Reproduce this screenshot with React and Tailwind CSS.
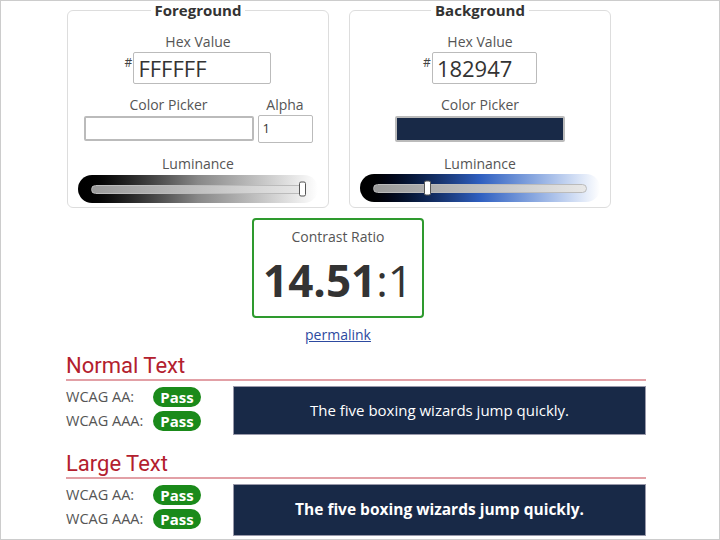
import React from 'react';

const font = { fontFamily: '"Open Sans", "Noto Sans", sans-serif' };

const Slider = ({ track, thumb }) => (
    <div className={`w-[240px] h-[28px] rounded-full flex items-center px-[13px] ${track}`}>
        <div className="relative w-full h-[9px] rounded-full bg-gradient-to-r from-[#9a9a9a] to-[#e8e8e8] border border-[#bbb]">
            <div className={`absolute top-1/2 -translate-y-1/2 w-[7px] h-[15px] bg-white border border-[#555] rounded-[2px] ${thumb}`} />
        </div>
    </div>
);

const Panel = ({ title, children }) => (
    <fieldset className="w-[262px] h-[206px] border border-[#ddd] rounded-[6px] flex flex-col items-center">
        <legend className="mx-auto px-1 text-[15px] font-bold text-[#333] leading-[17px]">{title}</legend>
        <div className="mt-[16px] text-[14px] text-[#555] leading-none">Hex Value</div>
        {children}
    </fieldset>
);

const Pass = () => (
    <span className="inline-flex items-center justify-center w-[48px] h-[20px] rounded-full bg-[#1a8a1a] text-white font-bold text-[15px] leading-none">Pass</span>
);

const Result = ({ title, bold, className }) => (
    <section className={className}>
        <h2 className="text-[22px] text-[#b3202e] leading-none pb-[2px] border-b-2 border-[#e2a0a6]" style={{ fontFamily: 'Roboto, sans-serif' }}>{title}</h2>
        <div className="flex mt-[5px]">
            <div className="w-[167px] flex flex-col gap-[2px]">
                <div className="flex items-center h-[22px] text-[14.5px] text-[#555]"><span className="w-[87px]">WCAG AA:</span><Pass /></div>
                <div className="flex items-center h-[22px] text-[14.5px] text-[#555]"><span className="w-[87px]">WCAG AAA:</span><Pass /></div>
            </div>
            <div className={`flex-1 flex items-center justify-center bg-[#182947] text-white border border-[#99a] ${bold ? 'h-[52px] text-[15.5px] font-bold' : 'h-[49px] text-[15px]'}`}>
                The five boxing wizards jump quickly.
            </div>
        </div>
    </section>
);

export default function App() {
    return (
        <div className="w-[720px] h-[540px] bg-white border border-[#ccc] overflow-hidden" style={font}>
            <div className="flex gap-[20px] pl-[66px] pt-[1px]">
                <Panel title="Foreground">
                    <div className="flex items-start mt-[3px]">
                        <span className="text-[12px] text-[#444] mt-[2px] mr-[1px]">#</span>
                        <div className="w-[138px] h-[32px] border border-[#bbb] rounded-[2px] flex items-center px-[4px] text-[22px] text-[#333]">FFFFFF</div>
                    </div>
                    <div className="flex gap-[4px] mt-[14px] items-end">
                        <div className="flex flex-col items-center">
                            <div className="text-[14px] text-[#555] leading-none mb-[4px]">Color Picker</div>
                            <div className="w-[170px] h-[25px] border-2 border-[#bbb] rounded-[2px] bg-white mb-[2px]" />
                        </div>
                        <div className="flex flex-col items-center">
                            <div className="text-[14px] text-[#555] leading-none mb-[3px]">Alpha</div>
                            <div className="w-[55px] h-[28px] border border-[#bbb] rounded-[2px] flex items-center px-[4px] text-[13px] text-[#333]">1</div>
                        </div>
                    </div>
                    <div className="text-[14px] text-[#555] leading-none mt-[14px] mb-[4px]">Luminance</div>
                    <Slider track="bg-gradient-to-r from-black via-[#888] to-white" thumb="right-[-2px]" />
                </Panel>
                <Panel title="Background">
                    <div className="flex items-start mt-[3px]">
                        <span className="text-[12px] text-[#444] mt-[2px] mr-[1px]">#</span>
                        <div className="w-[105px] h-[32px] border border-[#bbb] rounded-[2px] flex items-center px-[4px] text-[22px] text-[#333]">182947</div>
                    </div>
                    <div className="text-[14px] text-[#555] leading-none mt-[14px] mb-[4px]">Color Picker</div>
                    <div className="w-[170px] h-[26px] border-2 border-[#bbb] rounded-[2px] bg-[#182947]" />
                    <div className="text-[14px] text-[#555] leading-none mt-[15px] mb-[3px]">Luminance</div>
                    <Slider track="bg-gradient-to-r from-black via-[#2f5fc0] to-white" thumb="left-[50px]" />
                </Panel>
            </div>

            <div className="flex flex-col items-center mt-[10px]">
                <div className="w-[172px] h-[100px] border-2 border-[#2e9a2e] rounded-[4px] flex flex-col items-center ml-[-44px]">
                    <div className="mt-[10px] text-[14px] text-[#555] leading-none">Contrast Ratio</div>
                    <div className="mt-[14px] text-[44px] text-[#333] leading-none">
                        <span className="font-bold">14.51</span>:1
                    </div>
                </div>
                <a className="mt-[10px] ml-[-44px] text-[14px] text-[#2d4aa0] underline leading-none">permalink</a>
            </div>

            <div className="pl-[65px] pr-[73px] mt-[13px]">
                <Result title="Normal Text" />
                <Result title="Large Text" bold className="mt-[18px]" />
            </div>
        </div>
    );
}
